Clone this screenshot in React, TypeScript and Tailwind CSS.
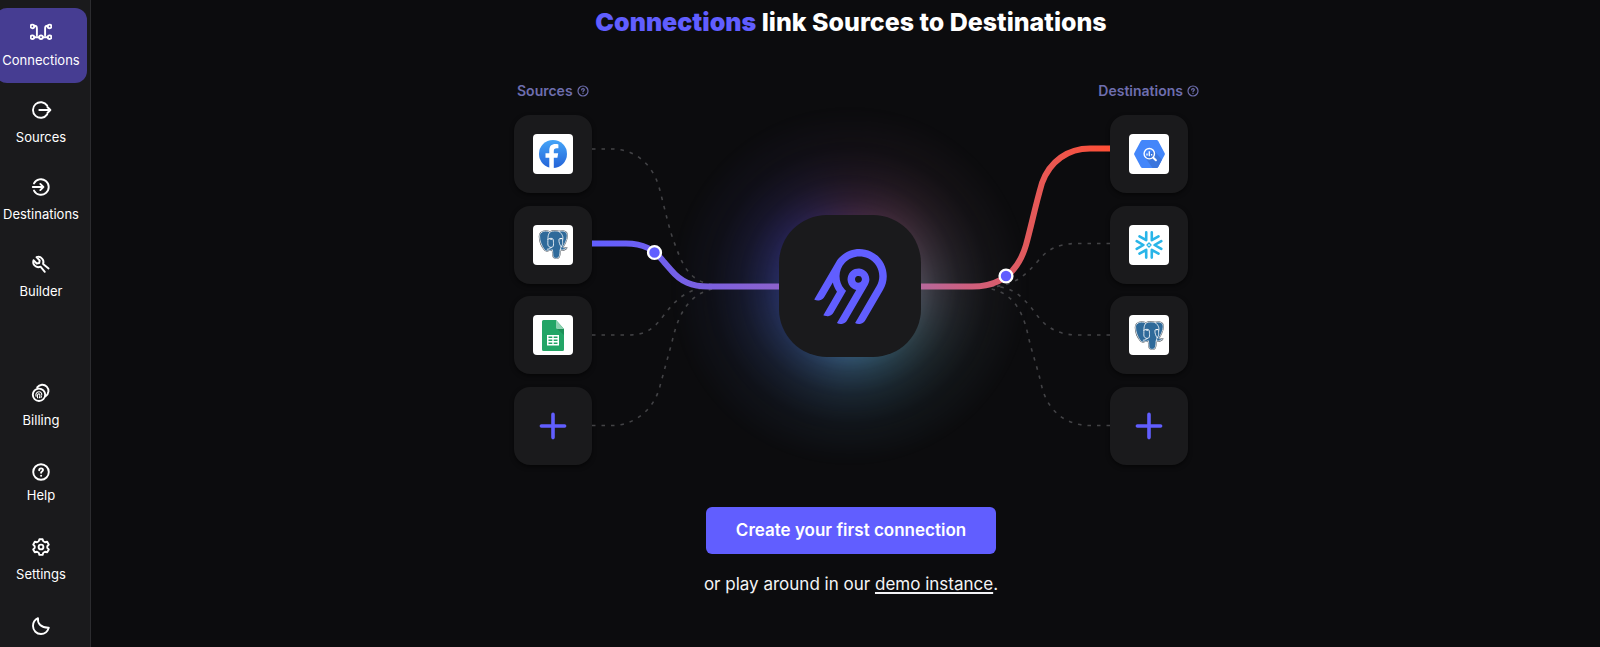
import type { ReactNode } from "react";
import { SiAirbyte } from "react-icons/si";

function Stroke({ children }: { children: ReactNode }) {
  return (
    <svg
      viewBox="0 0 22 22"
      className="size-[22px]"
      fill="none"
      stroke="currentColor"
      strokeWidth="1.9"
      strokeLinecap="round"
      strokeLinejoin="round"
      aria-hidden="true"
    >
      {children}
    </svg>
  );
}

const ConnectionsIcon = () => (
  <Stroke>
    <circle cx="2.400" cy="5.400" r="1.800" />
    <circle cx="19.600" cy="5.400" r="1.800" />
    <circle cx="2.400" cy="16.200" r="1.800" />
    <circle cx="11" cy="16.200" r="1.800" />
    <circle cx="19.600" cy="16.200" r="1.800" />
    <path d="M4.400 4.800c1.900 0 2.500.8 2.500 2.400v7M17.600 4.800c-1.900 0-2.500.8-2.500 2.400v7M4.400 16.200h4.600M13 16.200h4.600" />
  </Stroke>
);

const SourcesIcon = () => (
  <Stroke>
    <path d="M17.200 6.600A7.800 7.800 0 1 0 17.200 15.400" />
    <path d="M9.300 11h11M17.400 8l3 3-3 3" />
  </Stroke>
);

const DestinationsIcon = () => (
  <Stroke>
    <path d="M4 7.400A7.800 7.800 0 1 1 4 14.600" />
    <path d="M2.800 11h10.600M10.300 7.900l3.100 3.100-3.100 3.100" />
  </Stroke>
);

const BuilderIcon = () => (
  <Stroke>
    <path d="M14.800 18.800l-4.300-5.100c-2.300.9-4.600.3-6-1.300-1.300-1.500-1.600-3.400-1-5.200l3.200 3.300 2.500-.5.500-2.500L6.500 4.200c1.800-.7 4-.4 5.400 1.100 1.500 1.500 1.900 3.700 1.200 5.600l5.500 4.600" />
  </Stroke>
);

const BillingIcon = () => (
  <Stroke>
    <circle cx="9" cy="12.800" r="6.200" />
    <path d="M7.200 5.400a6.200 6.200 0 1 1 8.400 8.800" />
    <path strokeWidth="1.100" d="M6 14.200c-.6-2 .6-4.200 2.800-4.400 2-.1 3.300 1.500 2.900 3.400M7.600 15.800c-.4-1.700-.3-3.900 1.200-4 1.500 0 1.300 1.800.6 4M11 15.600l.5-1" />
  </Stroke>
);

const HelpIcon = () => (
  <Stroke>
    <circle cx="11" cy="11" r="7.800" />
    <path d="M9.200 9.200c0-1.100.8-1.800 1.900-1.800s1.900.7 1.900 1.700c0 1.300-1.900 1.400-1.900 2.700" />
    <path strokeWidth="2" d="M11.100 14.700v.1" />
  </Stroke>
);

const SettingsIcon = () => (
  <Stroke>
    <circle cx="11" cy="11" r="2.400" />
    <path d="M9.400 3.200h3.200l.7 2.100 1.700 1 2.200-.5 1.600 2.800-1.500 1.600v1.700l1.500 1.600-1.600 2.800-2.200-.5-1.700 1-.7 2.100H9.400l-.7-2.100-1.700-1-2.200.5-1.600-2.800 1.500-1.600v-1.700L3.200 8.600l1.600-2.800 2.200.5 1.700-1z" />
  </Stroke>
);

const MoonIcon = () => (
  <Stroke>
    <path d="M8 3.200c-.8 5.400 3 9.700 10.800 9.500C17.600 16.400 14.600 19 11 19c-4.400 0-8-3.500-8-7.900 0-3.600 2-6.600 5-7.900z" />
  </Stroke>
);

function NavItem({ icon, label, className, active }: { icon: ReactNode; label: string; className: string; active?: boolean }) {
  return (
    <a
      href="#"
      aria-current={active ? "page" : undefined}
      className={`flex flex-col items-center rounded-xl text-[13px] leading-4 text-white ${className}`}
    >
      {icon}
      {label}
    </a>
  );
}

function Sidebar() {
  return (
    <nav className="flex w-[91px] shrink-0 overflow-hidden border-r border-[#2c2c2f] bg-[#1a1a1c]">
      <div className="-ml-[5px] flex w-[92px] shrink-0 flex-col pt-2">
        <NavItem icon={<ConnectionsIcon />} label="Connections" active className="h-[75px] gap-[9px] bg-[#463d92] pt-[13px]" />
        <NavItem icon={<SourcesIcon />} label="Sources" className="h-[77px] gap-2 pt-4" />
        <NavItem icon={<DestinationsIcon />} label="Destinations" className="h-[77px] gap-2 pt-4" />
        <NavItem icon={<BuilderIcon />} label="Builder" className="h-[77px] gap-2 pt-4" />
        <div className="mt-[52px] flex flex-col">
          <NavItem icon={<BillingIcon />} label="Billing" className="h-[79px] gap-2 pt-4" />
          <NavItem icon={<HelpIcon />} label="Help" className="h-[75px] gap-1 pt-4" />
          <NavItem icon={<SettingsIcon />} label="Settings" className="h-[79px] gap-2 pt-4" />
          <button type="button" aria-label="Toggle theme" className="flex justify-center pt-4 text-white">
            <MoonIcon />
          </button>
        </div>
      </div>
    </nav>
  );
}

const FacebookLogo = () => (
  <svg viewBox="0 0 28 28" className="size-7" aria-hidden="true">
    <defs>
      <linearGradient id="fb" x1="0" y1="0" x2="0" y2="1">
        <stop offset="0" stopColor="#45a5f8" />
        <stop offset="1" stopColor="#2463d8" />
      </linearGradient>
    </defs>
    <circle cx="14" cy="14" r="14" fill="url(#fb)" />
    <path d="M10.300 28V17.800H6.500v-4.600h3.800v-2.500c0-4.500 2-6.600 6.300-6.600.8 0 2.200.2 2.800.3V8.300h-1.700c-2.100 0-2.900.8-2.900 2.900v2h4.400l-.8 4.600h-3.600V28z" fill="#fff" />
  </svg>
);

const elephant =
  "M2.200 2.200C4.500.4 8 .8 10.600 1.900 13.500.5 17 .6 19.300 1.400 21.600.5 25 .7 26.600 2.700 28.300 5 26.500 11 23.600 15.600c-.7 1-.4 1.600.5 1.700 1.300.1 2-.1 2.700-.2-.8 1.800-3.600 2.500-6.300 2.200-.3 2.200-.3 4-.7 5.500-.5 2-2 2.800-3.700 2.600-1.700-.2-2.500-1.300-2.700-3-.2-1.800-.1-3.500-.4-5.300-1 .6-2.400.7-3.800.5-.8 1-2.800 1-4-.6C2.400 15.500.3 9.800.5 5.600.6 4.100 1.200 2.900 2.200 2.200z";

const PostgresLogo = () => (
  <svg viewBox="-1 -1 30 30" className="size-[31px]" strokeLinecap="round" strokeLinejoin="round" aria-hidden="true">
    <path d={elephant} fill="#fff" stroke="#3c444c" strokeWidth="1.400" />
    <path d={elephant} fill="#2f6a9a" stroke="#fff" strokeWidth="0.700" />
    <g fill="none" stroke="#fff" strokeWidth="0.800">
      <path d="M10.600 1.900C8 4.500 8.700 9 8.500 13.400c0 2 1.400 3.700 3.600 3.400 1.700-.3 2-1.700 1.900-3.600-.1-1.900.1-3.200-.6-4.600-1.200-.9-3.400-.7-4.800.3" />
      <path d="M12 16.800c-1.200 1-2.600 1.700-4 1.800" />
      <path d="M19.300 1.400c3.300 2.300 4.300 5.200 3.600 8.200-.4 1.900.3 3.200-.3 4.600l-1.400 2.700-.7 2.400" />
      <path d="M22.900 8.600c-1-.6-2.700-.6-3.600.2-.3 3.200.9 5.500 2 7.300" />
    </g>
    <path d="M10.800 8.700l1.400.1M20.600 8.400l1.200-.1" stroke="#fff" strokeWidth="1" />
  </svg>
);

const SheetsLogo = () => (
  <svg viewBox="0 0 22 31" className="h-[31px] w-[22px]" aria-hidden="true">
    <path d="M1.500 0H14l8 9v20.500a1.500 1.500 0 0 1-1.500 1.500h-19A1.500 1.500 0 0 1 0 29.500v-28A1.500 1.500 0 0 1 1.500 0z" fill="#23a566" />
    <path d="M14 0l8 9h-6.500A1.500 1.500 0 0 1 14 7.500z" fill="#8ed1b1" />
    <path d="M15.200 9H22v6z" fill="#1c8f57" />
    <path fillRule="evenodd" d="M5 15h12v10.500H5zM6.500 16.500v1.600h3.800v-1.600zm5.200 0v1.600h3.800v-1.600zM6.500 19.500v1.600h3.800v-1.600zm5.200 0v1.600h3.800v-1.600zM6.500 22.500v1.600h3.800v-1.600zm5.200 0v1.600h3.800v-1.600z" fill="#fff" />
  </svg>
);

const BigQueryLogo = () => (
  <svg viewBox="0 0 31 28" className="h-7 w-[31px]" aria-hidden="true">
    <path d="M8.500 0h14a2 2 0 0 1 1.700 1l6.400 12a2 2 0 0 1 0 2l-6.400 12a2 2 0 0 1-1.700 1h-14a2 2 0 0 1-1.700-1L.4 15a2 2 0 0 1 0-2L6.800 1a2 2 0 0 1 1.700-1z" fill="#4386fa" />
    <path d="M19.500 10L28 19.500 24.200 27a2 2 0 0 1-1.700 1h-4L11.500 18z" fill="#3b76dd" />
    <circle cx="15.300" cy="13.700" r="5.200" fill="none" stroke="#fff" strokeWidth="1.400" />
    <path d="M19.300 17.700l2.600 2.600" stroke="#fff" strokeWidth="2" strokeLinecap="round" />
    <path d="M13 13.500v2M15.300 11.300v5M17.600 14v1.500" stroke="#fff" strokeWidth="1.300" />
  </svg>
);

const SnowflakeLogo = () => (
  <svg viewBox="-14 -14 28 28" className="size-7 text-[#29b5e8]" fill="none" stroke="currentColor" strokeLinecap="round" strokeLinejoin="round" aria-hidden="true">
    <g strokeWidth="2.600">
      {[0, 60, 120, 180, 240, 300].map((angle) => (
        <path key={angle} d="M12.300-3.900L5.600 0l6.700 3.900" transform={`rotate(${angle})`} />
      ))}
    </g>
    <path d="M0-2L2 0 0 2-2 0z" strokeWidth="1.400" />
  </svg>
);

function Card({ name, children }: { name: string; children?: ReactNode }) {
  return (
    <button
      type="button"
      aria-label={name}
      className="flex size-[78px] items-center justify-center rounded-2xl bg-[#1a1a1c] shadow-[0_2px_4px_rgba(0,0,0,0.5)]"
    >
      {children ? (
        <span className="flex size-10 items-center justify-center rounded-[4px] bg-white">{children}</span>
      ) : (
        <svg viewBox="0 0 28 28" className="size-7 text-[#615eff]" aria-hidden="true">
          <path d="M14 2.400v23.200M2.400 14h23.200" stroke="currentColor" strokeWidth="3.600" strokeLinecap="round" />
        </svg>
      )}
    </button>
  );
}

function ColumnLabel({ text }: { text: string }) {
  return (
    <div className="flex items-center gap-[3px] text-sm leading-5 font-semibold text-[#6e6eae]">
      {text}
      <svg viewBox="0 0 14 14" className="size-[14px]" fill="none" stroke="currentColor" strokeWidth="1.200" strokeLinecap="round" aria-hidden="true">
        <circle cx="7" cy="7" r="5" />
        <path d="M5.700 5.900c0-.8.600-1.300 1.300-1.300s1.300.5 1.300 1.200c0 .9-1.300 1-1.300 2M7 9.300v.1" />
      </svg>
    </div>
  );
}

function Diagram() {
  return (
    <div className="relative flex-1">
      <div className="absolute top-[-9px] left-[78px] size-[360px] [mask-image:radial-gradient(closest-side,#000_28%,rgba(0,0,0,0.72)_40%,rgba(0,0,0,0.5)_48%,rgba(0,0,0,0.27)_60%,rgba(0,0,0,0.1)_76%,transparent)]">
        <div className="size-full bg-[conic-gradient(from_0deg,#4a2c4e,#5f3d52_36deg,#5b4c5c_68deg,#5b5c6a_95deg,#45646f_130deg,#3c6a84_160deg,#3e6990_185deg,#324a80_225deg,#2d3678_270deg,#352f7b_310deg,#3d2d66_335deg,#4a2c4e)] blur-md" />
      </div>
      <svg viewBox="0 0 518 350" preserveAspectRatio="none" className="relative block size-full" fill="none" aria-hidden="true">
        <defs>
          <linearGradient id="flow" gradientUnits="userSpaceOnUse" x1="0" y1="0" x2="518" y2="0">
            <stop offset="0" stopColor="#615eff" />
            <stop offset="0.360" stopColor="#8c62cc" />
            <stop offset="0.640" stopColor="#b8689a" />
            <stop offset="0.720" stopColor="#cc5f80" />
            <stop offset="0.840" stopColor="#e25a5c" />
            <stop offset="1" stopColor="#ff4f35" />
          </linearGradient>
        </defs>
        <g stroke="#434346" strokeWidth="1.600" strokeDasharray="3.500 6">
          <path d="M0 34H20C42 34 60 48 67 72C74 98 77 115 84 132C93 158 103 168 124 170" />
          <path d="M0 220H36C56 220 63 212 72 200C86 182 96 173 124 171" />
          <path d="M0 310.500H20C42 310.500 62 295 68 271L80 227C87 195 99 178 124 173" />
          <path d="M518 128.500H485C464 128.500 454 136 446 146C432 162 422 170 400 172" />
          <path d="M518 220H485C464 220 452 210 444 199C430 180 420 172 400 171" />
          <path d="M518 310.500H498C472 310.500 454 294 449 268C443 244 440 238 436 220C430 192 418 176 394 173" />
        </g>
        <g stroke="url(#flow)" strokeWidth="6">
          <path d="M0 128.500H34C51 128.500 62 134 72 147L79 155C89 167 100 171.500 116 171.500H190" />
          <path d="M327 171.500H380C412 171.500 427 154 434 130C440 108 443 92 450 68C458 46 476 33.500 498 33.500H518" />
        </g>
        <g fill="#615eff" stroke="#fff" strokeWidth="2.400">
          <circle cx="62.500" cy="137.500" r="6.400" />
          <circle cx="414" cy="161" r="6.400" />
        </g>
      </svg>
      <div className="absolute top-[100px] left-[187px] flex size-[142px] items-center justify-center rounded-[48px] bg-[#1a1a1c]">
        <SiAirbyte className="size-[75px] text-[#615eff]" aria-label="Airbyte" />
      </div>
    </div>
  );
}

export default function App() {
  return (
    <div className="flex min-h-screen bg-[#0c0c0e] font-['Inter',sans-serif]">
      <Sidebar />
      <main className="flex flex-1 flex-col items-center pt-1 pl-[11px]">
        <h1 className="text-[25px] leading-9 font-extrabold text-white">
          <span className="font-black text-[#615eff]">Connections</span> link Sources to Destinations
        </h1>
        <section className="mt-[41px] flex w-[674px] flex-col gap-[14px]">
          <div className="-mr-3 flex justify-between pl-[3px]">
            <ColumnLabel text="Sources" />
            <ColumnLabel text="Destinations" />
          </div>
          <div className="flex h-[350px]">
            <div className="flex flex-col justify-between">
              <Card name="Facebook Marketing"><FacebookLogo /></Card>
              <Card name="Postgres source"><PostgresLogo /></Card>
              <Card name="Google Sheets"><SheetsLogo /></Card>
              <Card name="Add source" />
            </div>
            <Diagram />
            <div className="flex flex-col justify-between">
              <Card name="BigQuery"><BigQueryLogo /></Card>
              <Card name="Snowflake"><SnowflakeLogo /></Card>
              <Card name="Postgres destination"><PostgresLogo /></Card>
              <Card name="Add destination" />
            </div>
          </div>
        </section>
        <button type="button" className="mt-[42px] h-[47px] rounded-md bg-[#615eff] px-[30px] text-[17px] font-semibold text-white">
          Create your first connection
        </button>
        <p className="mt-[18px] text-[17px] leading-6 text-[#f4f4f6]">
          or play around in our{" "}
          <a href="#" className="underline decoration-2 underline-offset-2">demo instance</a>.
        </p>
      </main>
    </div>
  );
}
